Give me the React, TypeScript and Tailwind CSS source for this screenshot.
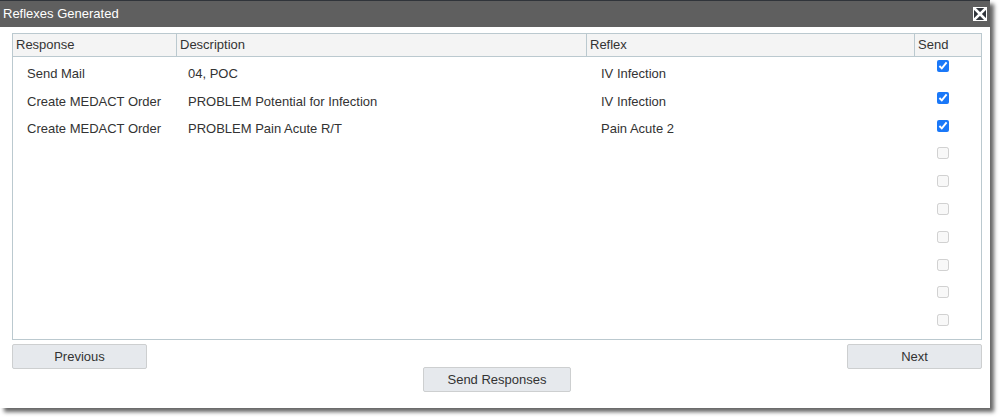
type Reflex = { response: string; description: string; reflex: string };

const reflexes: Reflex[] = [
  { response: "Send Mail", description: "04, POC", reflex: "IV Infection" },
  { response: "Create MEDACT Order", description: "PROBLEM Potential for Infection", reflex: "IV Infection" },
  { response: "Create MEDACT Order", description: "PROBLEM Pain Acute R/T", reflex: "Pain Acute 2" },
];

const ROW_COUNT = 10;
const rows: (Reflex | null)[] = Array.from({ length: ROW_COUNT }, (_, i) => reflexes[i] ?? null);

const headCell = "border-b border-[#bbc9cf] bg-[#f4f4f4] pb-px pl-[3px] text-left font-normal";
const button =
  "h-[25px] rounded-[2px] border border-[#cdcfd0] bg-[#e6e9ed] text-center leading-5 hover:bg-[#dde1e6]";

function CloseIcon() {
  return (
    <svg viewBox="0 0 14 14" className="size-[14px]" aria-hidden="true">
      <rect width="14" height="14" fill="#fff" />
      <rect x="1" y="1" width="12" height="12" fill="#30343a" />
      <path d="M2 2l10 10M12 2L2 12" fill="none" stroke="#fff" strokeWidth="2.6" strokeLinecap="square" />
    </svg>
  );
}

export default function App() {
  return (
    <div className="bg-white pr-[9px] pb-[9px] font-['Liberation_Sans',Arial,sans-serif] text-[13px] leading-5 text-[#333]">
      <section className="bg-white shadow-[4px_4px_4px_rgba(0,0,0,0.6)]" aria-labelledby="dialog-title">
        <header className="flex h-[27px] items-center justify-between border-t border-[#30343a] bg-[#5f5f5f] pr-[3px] pl-[3px]">
          <h1 id="dialog-title" className="text-white">
            Reflexes Generated
          </h1>
          <button type="button" aria-label="Close">
            <CloseIcon />
          </button>
        </header>

        <div className="pt-1.5 pr-2 pb-4 pl-3">
          <table className="h-[307px] w-full table-fixed border-separate border-spacing-0 border border-[#bbc9cf]">
            <colgroup>
              <col className="w-[164px]" />
              <col className="w-[410px]" />
              <col />
              <col className="w-[66px]" />
            </colgroup>
            <thead>
              <tr className="h-[23px]">
                <th scope="col" className={`${headCell} border-r`}>Response</th>
                <th scope="col" className={`${headCell} border-r`}>Description</th>
                <th scope="col" className={`${headCell} border-r`}>Reflex</th>
                <th scope="col" className={headCell}>Send</th>
              </tr>
            </thead>
            <tbody>
              {rows.map((row, i) => (
                <tr key={i} className="h-[27px] first:h-[31px]">
                  <td className="pb-[5px] pl-3.5 align-bottom">{row?.response}</td>
                  <td className="pb-[5px] pl-[11px] align-bottom">{row?.description}</td>
                  <td className="pb-[5px] pl-3.5 align-bottom">{row?.reflex}</td>
                  <td className="pt-[3px] pl-[22px] align-top">
                    <input
                      type="checkbox"
                      className="block size-3 accent-[#1a78f8]"
                      aria-label={row ? `Send ${row.response}, ${row.description}` : `Send row ${i + 1}`}
                      defaultChecked={row !== null}
                      disabled={row === null}
                    />
                  </td>
                </tr>
              ))}
            </tbody>
          </table>

          <div className="mt-1 flex items-start justify-between">
            <button type="button" className={`${button} w-[135px]`}>Previous</button>
            <button type="button" className={`${button} mt-[23px] w-[148px]`}>Send Responses</button>
            <button type="button" className={`${button} w-[135px]`}>Next</button>
          </div>
        </div>
      </section>
    </div>
  );
}
